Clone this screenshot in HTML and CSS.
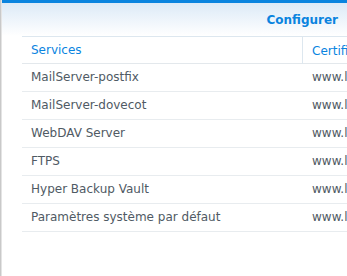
FILE: index.html
```html
<!DOCTYPE html>
<html>
<head>
<meta charset="utf-8">
<link rel="stylesheet" href="styles.css">
</head>
<body>
<div class="window">
  <div class="topbar"></div>
  <div class="head">
    <div class="toolbar"><span class="action">Configurer</span></div>
  </div>
  <div class="grid">
    <div class="row hdr"><div class="c1">Services</div><div class="c2">Certificat</div></div>
    <div class="row"><div class="c1">MailServer-postfix</div><div class="c2">www.le-domaine.fr</div></div>
    <div class="row"><div class="c1">MailServer-dovecot</div><div class="c2">www.le-domaine.fr</div></div>
    <div class="row"><div class="c1">WebDAV Server</div><div class="c2">www.le-domaine.fr</div></div>
    <div class="row"><div class="c1">FTPS</div><div class="c2">www.le-domaine.fr</div></div>
    <div class="row"><div class="c1">Hyper Backup Vault</div><div class="c2">www.le-domaine.fr</div></div>
    <div class="row"><div class="c1">Paramètres système par défaut</div><div class="c2">www.le-domaine.fr</div></div>
  </div>
</div>
</body>
</html>
```
FILE: styles.css
```css
html, body { margin: 0; padding: 0; background: #fff; overflow: hidden; }
body { width: 347px; height: 276px; font-family: "DejaVu Sans", Verdana, sans-serif; }
.window {
  height: 276px;
  border-left: 1px solid #c9c9c9;
  box-shadow: inset 1px 0 0 #e4e4e4;
  box-sizing: border-box;
  overflow: hidden;
}
.topbar { height: 3px; background: #0a84df; margin-left: 1px; }
.head {
  height: 33px;
  background: linear-gradient(#dceaf7, #ffffff);
  margin-left: 1px;
}
.toolbar { display: flex; justify-content: flex-end; padding-right: 9px; padding-top: 10px; }
.action { color: #0a84df; font-weight: bold; font-size: 12px; white-space: nowrap; }
.grid { margin-left: 21px; width: 420px; border-top: 1px solid #dde7ef; }
.row { display: grid; grid-template-columns: 280px 1fr; height: 28px; border-bottom: 1px solid #e8ecef; box-sizing: border-box; align-items: center; }
.row.hdr { height: 27px; border-bottom-color: #e3e8ec; }
.c1, .c2 { padding-left: 9px; font-size: 12px; color: #505a64; white-space: nowrap; overflow: hidden; line-height: 27px; }
.hdr .c1, .hdr .c2 { color: #0a84df; line-height: 28px; }
.hdr .c2 { border-left: 1px solid #dde7ef; padding-left: 9px; line-height: 26px; padding-top: 1px; }
.row:not(.hdr) .c2 { padding-left: 10px; }
```
